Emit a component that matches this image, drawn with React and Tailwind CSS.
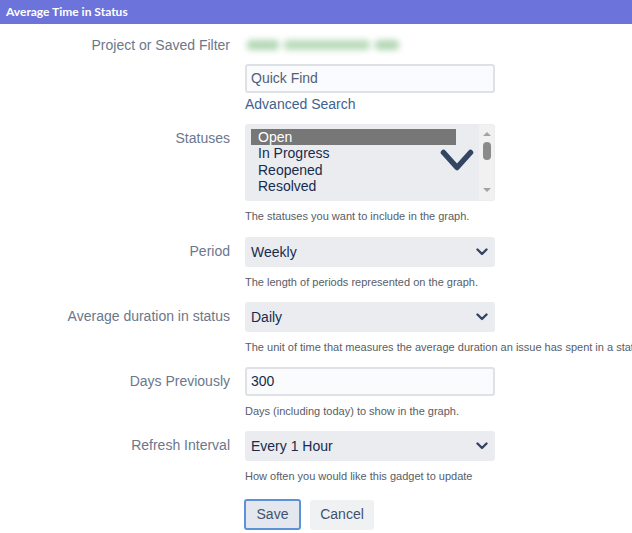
import React from "react";

const Chevron = () => (
  <svg width="12" height="8" viewBox="0 0 12 8" className="shrink-0">
    <path d="M1.5 1.5 L6 6 L10.5 1.5" fill="none" stroke="#344563" strokeWidth="2.4" strokeLinecap="round" strokeLinejoin="round" />
  </svg>
);

const Label = ({ children, pt = "pt-[5px]" }) => (
  <div className={`w-[230px] shrink-0 text-right text-[14px] leading-[18px] text-[#6b778c] ${pt}`}>{children}</div>
);

const Help = ({ children }) => (
  <div className="mt-[8px] text-[11px] leading-[14px] text-[#585d66] whitespace-nowrap">{children}</div>
);

const Select = ({ value }) => (
  <div className="h-[30px] w-[250px] rounded-[3px] bg-[#ebecf0] flex items-center justify-between pl-[6px] pr-[7px] text-[14px] text-[#172b4d]">
    <span>{value}</span>
    <Chevron />
  </div>
);

export default function App() {
  return (
    <div className="w-[632px] h-[533px] bg-white overflow-hidden font-['Liberation_Sans',Arial,sans-serif]">
      <div className="h-[24px] bg-[#6c73db] px-[6px] flex items-center text-white font-bold text-[12px] font-['Lato',sans-serif]">
        Average Time in Status
      </div>

      <div className="pt-[12px]">
        {/* Project */}
        <div className="flex">
          <Label pt="pt-0">Project or Saved Filter</Label>
          <div className="ml-[15px] w-[250px]">
            <div className="h-[18px] flex items-center gap-[5px] blur-[3px] pl-[2px]">
              <div className="h-[10px] w-[32px] rounded-sm bg-[#b1d7b3]" />
              <div className="h-[10px] w-[86px] rounded-sm bg-[#b8dbba]" />
              <div className="h-[10px] w-[24px] rounded-sm bg-[#b1d7b3]" />
            </div>
            <div className="mt-[10px] h-[29px] w-[250px] border-2 border-[#dfe1e6] bg-[#fafbfc] rounded-[3px] flex items-center pl-[4px] text-[14px] text-[#505f79]">
              Quick Find
            </div>
            <div className="mt-[2px] text-[14px] leading-[18px] text-[#3e6291]">Advanced Search</div>
          </div>
        </div>

        {/* Statuses */}
        <div className="flex mt-[11px]">
          <Label>Statuses</Label>
          <div className="ml-[15px] w-[250px]">
            <div className="relative h-[77px] w-[250px] rounded-[3px] bg-[#ebecf0] flex">
              <div className="pl-[6px] pt-[5px] w-[211px] text-[14px] leading-[16.5px] text-[#172b4d]">
                <div className="bg-[#777777] text-white pl-[7px] h-[16px]">Open</div>
                <div className="pl-[7px]">In Progress</div>
                <div className="pl-[7px]">Reopened</div>
                <div className="pl-[7px]">Resolved</div>
              </div>
              <div className="ml-auto mr-[1px] my-[1px] w-[15px] bg-[#f1f1f1] flex flex-col items-center">
                <div className="mt-[7px] w-0 h-0 border-l-[4px] border-r-[4px] border-b-[4px] border-l-transparent border-r-transparent border-b-[#a3a3a3]" />
                <div className="mt-[6px] w-[8px] h-[18px] rounded-full bg-[#8a8a8a]" />
                <div className="flex-1" />
                <div className="mb-[8px] w-0 h-0 border-l-[4px] border-r-[4px] border-t-[4px] border-l-transparent border-r-transparent border-t-[#a3a3a3]" />
              </div>
              <svg width="34" height="24" viewBox="0 0 34 24" className="absolute left-[195px] top-[25px]">
                <path d="M3.5 3.5 L17 18.5 L30.5 3.5" fill="none" stroke="#344563" strokeWidth="5.5" strokeLinecap="round" strokeLinejoin="round" />
              </svg>
            </div>
            <Help>The statuses you want to include in the graph.</Help>
          </div>
        </div>

        {/* Period */}
        <div className="flex mt-[14px]">
          <Label>Period</Label>
          <div className="ml-[15px] w-[250px]">
            <Select value="Weekly" />
            <Help>The length of periods represented on the graph.</Help>
          </div>
        </div>

        {/* Average duration */}
        <div className="flex mt-[13px]">
          <Label>Average duration in status</Label>
          <div className="ml-[15px] w-[250px]">
            <Select value="Daily" />
            <Help>The unit of time that measures the average duration an issue has spent in a status.</Help>
          </div>
        </div>

        {/* Days Previously */}
        <div className="flex mt-[13px]">
          <Label>Days Previously</Label>
          <div className="ml-[15px] w-[250px]">
            <div className="h-[29px] w-[250px] border-2 border-[#dfe1e6] bg-[#fafbfc] rounded-[3px] flex items-center pl-[4px] text-[14px] text-[#172b4d]">
              300
            </div>
            <Help>Days (including today) to show in the graph.</Help>
          </div>
        </div>

        {/* Refresh Interval */}
        <div className="flex mt-[13px]">
          <Label>Refresh Interval</Label>
          <div className="ml-[15px] w-[250px]">
            <Select value="Every 1 Hour" />
            <Help>How often you would like this gadget to update</Help>
          </div>
        </div>

        {/* Buttons */}
        <div className="flex mt-[16px]">
          <div className="w-[230px] shrink-0" />
          <div className="ml-[14px] flex items-center gap-[9px]">
            <button className="h-[31px] w-[57px] rounded-[3px] border-2 border-[#5b93d6] bg-[#e4e8ee] text-[14px] text-[#42526e]">
              Save
            </button>
            <button className="h-[30px] w-[64px] rounded-[3px] bg-[#f0f1f3] text-[14px] text-[#42526e]">
              Cancel
            </button>
          </div>
        </div>
      </div>
    </div>
  );
}
